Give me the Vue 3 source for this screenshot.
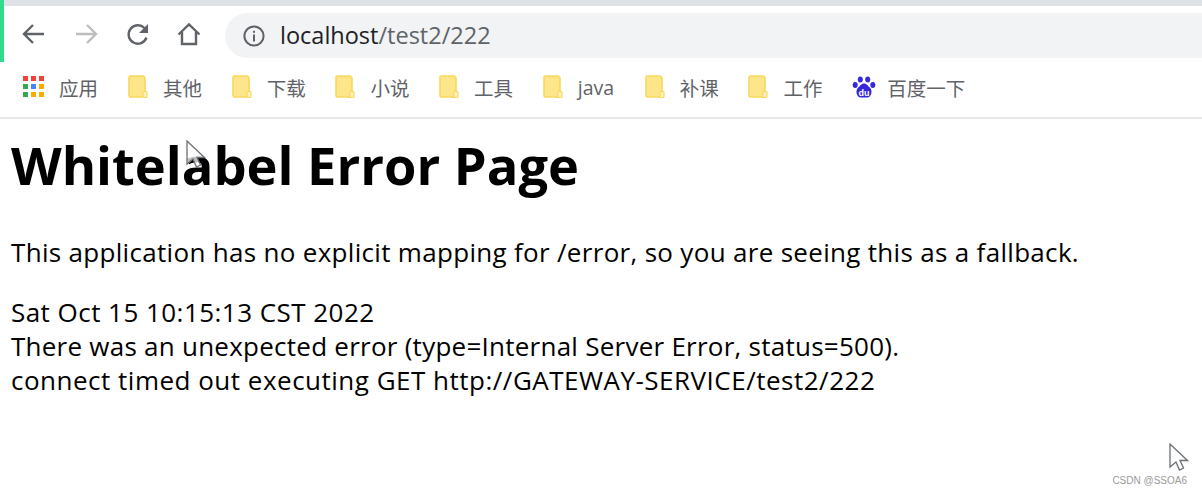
<script setup>
const bookmarks = ['其他', '下载', '小说', '工具', 'java', '补课', '工作']
const dots = ['#f44336','#f44336','#f44336','#34a853','#4285f4','#fbab00','#34a853','#fbab00','#fbab00']
</script>

<template>
  <div class="page">
    <div class="accent"></div>
    <div class="strip"></div>
    <div class="toolbar">
      <svg class="nav" width="26" height="26" viewBox="0 0 26 26" fill="none" stroke="#5f6368" stroke-width="2.4"><path d="M23 13H3M12 4l-9 9 9 9"/></svg>
      <svg class="nav fwd" width="26" height="26" viewBox="0 0 26 26" fill="none" stroke="#bdbdbd" stroke-width="2.4"><path d="M3 13h20M14 4l9 9-9 9"/></svg>
      <svg class="nav rel" width="26" height="26" viewBox="0 0 26 26" fill="none"><path d="M21.5 16.5A9.2 9.2 0 1 1 19.4 7" stroke="#5f6368" stroke-width="2.4"/><path d="M23 3v9h-9z" fill="#5f6368"/></svg>
      <svg class="nav home" width="26" height="26" viewBox="0 0 26 26" fill="none" stroke="#5f6368" stroke-width="2.4"><path d="M2.5 13.5 13 3.500l10.500 10M6 11v12h14V11"/></svg>
      <div class="omnibox">
        <svg width="24" height="24" viewBox="0 0 24 24" fill="none"><circle cx="12" cy="12" r="9.600" stroke="#5f6368" stroke-width="2"/><rect x="11" y="10.500" width="2" height="7" fill="#5f6368"/><rect x="11" y="6.800" width="2" height="2" fill="#5f6368"/></svg>
        <span class="url"><span class="host">localhost</span><span class="path">/test2/222</span></span>
      </div>
    </div>
    <div class="bookmarks">
      <div class="bm apps">
        <span class="grid"><i v-for="(c, i) in dots" :key="i" :style="{ background: c }"></i></span>
        <span class="label">应用</span>
      </div>
      <div v-for="b in bookmarks" :key="b" class="bm" :class="{ short: b === 'java' }">
        <svg class="ico" width="20" height="24" viewBox="0 0 20 24"><path d="M2.500 1h12A2.500 2.500 0 0 1 17 3.500V22H2.500A1.500 1.500 0 0 1 1 20.500V2.500A1.500 1.500 0 0 1 2.500 1z" fill="#fde68a" stroke="#f8d85c" stroke-width="1.600"/><rect x="15" y="16.500" width="4" height="6" rx="1" fill="#fff3c0" stroke="#f8d85c" stroke-width="1.200"/></svg>
        <span class="label">{{ b }}</span>
      </div>
      <div class="bm baidu">
        <svg class="ico" width="24" height="24" viewBox="0 0 24 24" fill="#3527e0"><ellipse cx="8.300" cy="4.500" rx="2.500" ry="3"/><ellipse cx="15.700" cy="4.500" rx="2.500" ry="3"/><ellipse cx="3.200" cy="10" rx="2.500" ry="2.900"/><ellipse cx="20.800" cy="10" rx="2.500" ry="2.900"/><path d="M12 8.500c3 0 4 2.600 6 4.300 2.600 2.300 2 9.700-3 9.700H9c-5 0-5.600-7.400-3-9.700 2-1.700 3-4.300 6-4.300z"/><text x="12" y="20.800" text-anchor="middle" font-size="9" font-family="Liberation Sans, sans-serif" font-weight="700" fill="#fff">du</text></svg>
        <span class="label">百度一下</span>
      </div>
    </div>
    <main class="content">
      <h1>Whitelabel Error Page</h1>
      <p class="lead">This application has no explicit mapping for /error, so you are seeing this as a fallback.</p>
      <div class="lines">
        <div class="l1">Sat Oct 15 10:15:13 CST 2022</div>
        <div class="l2">There was an unexpected error (type=Internal Server Error, status=500).</div>
        <div class="l3">connect timed out executing GET http://GATEWAY-SERVICE/test2/222</div>
      </div>
    </main>
    <svg class="cursor c1" width="20" height="30" viewBox="0 0 20 30"><path d="M1 1v23l6-5 3.500 8 4-2-3.500-7.500h7.500z" fill="#fff" fill-opacity=".75" stroke="#6b6f76" stroke-width="1.300"/></svg>
    <svg class="cursor c2" width="20" height="30" viewBox="0 0 20 30"><path d="M1 1v23l6-5 3.500 8 4-2-3.500-7.500h7.500z" fill="#fff" stroke="#6b6f76" stroke-width="1.300"/></svg>
    <div class="mark">CSDN @SSOA6</div>
  </div>
</template>

<style scoped>
.page {
  position: relative;
  width: 1202px;
  height: 495px;
  overflow: hidden;
  background: #fff;
  font-family: "Open Sans", "Noto Sans CJK SC", sans-serif;
}
.accent {
  position: absolute;
  left: 0;
  top: 0;
  width: 4px;
  height: 62px;
  background: #2fdc8c;
}
.strip {
  height: 6px;
  background: #dee1e6;
}
.toolbar {
  height: 56px;
  display: flex;
  align-items: center;
  padding-left: 21px;
  box-sizing: border-box;
}
.nav { flex: none; margin-right: 26px; }
.rel { margin-right: 25px; }
.home { margin-right: 23px; }
.omnibox {
  flex: 1;
  height: 45px;
  margin-top: 3px;
  border-radius: 23px 0 0 23px;
  background: #f1f3f4;
  display: flex;
  align-items: center;
  padding-left: 17px;
}
.url {
  margin-left: 14px;
  margin-bottom: 2px;
  font-size: 23.500px;
}
.host { color: #202124; }
.path { color: #5f6368; }
.bookmarks {
  display: flex;
  align-items: center;
  padding-left: 23px;
  padding-bottom: 5px;
  height: 50px;
  border-bottom: 2px solid #e8e8e8;
}
.bm {
  width: 103.700px;
  flex: none;
  display: flex;
  align-items: center;
  gap: 15px;
  height: 100%;
}
.short { width: 102px; }
.ico { flex: none; }
.apps { width: 105px; gap: 14px; }
.label {
  font-size: 19.500px;
  color: #5f6368;
  white-space: nowrap;
}
.grid {
  width: 22px;
  height: 22px;
  flex: none;
  display: grid;
  grid-template-columns: repeat(3, 5px);
  grid-auto-rows: 5px;
  gap: 3px;
}
.grid i { display: block; }
.baidu { gap: 11px; width: auto; }
.content {
  padding-left: 11px;
  color: #000;
}
h1 {
  margin: 10px 0 0;
  font-size: 52.400px;
  line-height: 72px;
  font-weight: 700;
}
.lead {
  margin: 34px 0 0;
  font-size: 26px;
  line-height: 35px;
  letter-spacing: 0.31px;
}
.lines {
  margin-top: 25px;
  font-size: 26px;
  line-height: 34px;
}
.l1 { letter-spacing: 0.46px; }
.l2 { letter-spacing: 0.25px; }
.l3 { letter-spacing: 0.5px; }
.cursor { position: absolute; }
.c1 { left: 186px; top: 140px; }
.c2 { left: 1169px; top: 443px; }
.mark {
  position: absolute;
  right: 15px;
  top: 475px;
  font-size: 10px;
  color: #9a9a9a;
  font-family: "Liberation Sans", sans-serif;
}
</style>
